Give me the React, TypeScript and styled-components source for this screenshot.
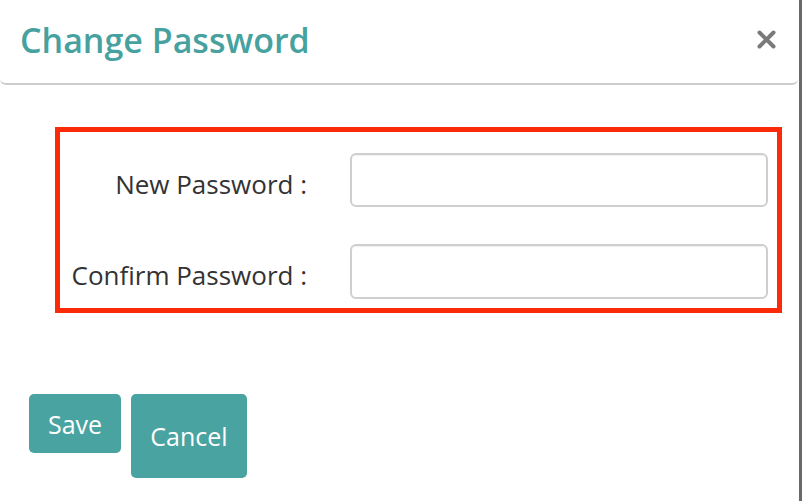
import styled, { createGlobalStyle } from 'styled-components';

const GlobalStyle = createGlobalStyle`
  body {
    margin: 0;
    font-family: "Open Sans", "Liberation Sans", sans-serif;
    background: #ffffff;
  }
`;

const Frame = styled.div`
  width: 802px;
  height: 501px;
  box-sizing: border-box;
  border-right: 3px solid #696969;
  background: #ffffff;
  display: flex;
  flex-direction: column;
  overflow: hidden;
`;

const Header = styled.div`
  height: 79px;
  margin-right: 1px;
  padding: 0 22px 4px 20px;
  display: flex;
  align-items: center;
  justify-content: space-between;
  border-bottom: 2px solid #cccccc;
  border-radius: 0 0 6px 6px;
  flex-shrink: 0;
`;

const Title = styled.h4`
  margin: 0;
  font-size: 34px;
  font-weight: 600;
  line-height: 1;
  color: #47a29f;
`;

const CloseButton = styled.button`
  border: none;
  background: none;
  padding: 0;
  width: 19px;
  height: 19px;
  display: flex;
  cursor: pointer;
`;

const Body = styled.div`
  padding: 42px 17px 0 55px;
`;

const FormBox = styled.div`
  border: 5px solid #fb2a08;
  display: grid;
  grid-template-columns: 247px 418px;
  column-gap: 43px;
  row-gap: 37px;
  padding: 21px 9px 9px 0;
`;

const Label = styled.label`
  text-align: right;
  align-self: center;
  padding-top: 9px;
  font-size: 26px;
  line-height: 1.2;
  color: #333333;
`;

const Input = styled.input<{ $h: number }>`
  height: ${p => p.$h}px;
  box-sizing: border-box;
  border: 2px solid #cfcfcf;
  border-radius: 6px;
  box-shadow: inset 0 1px 1px rgba(0, 0, 0, 0.06);
  font-family: inherit;
  font-size: 20px;
  padding: 0 12px;
  outline: none;
`;

const Actions = styled.div`
  margin-top: 81px;
  padding-left: 29px;
  display: flex;
  align-items: flex-start;
  gap: 10px;
`;

const Button = styled.button<{ $w: number; $h: number }>`
  width: ${p => p.$w}px;
  height: ${p => p.$h}px;
  background: #49a3a0;
  color: #ffffff;
  border: none;
  border-radius: 5px;
  font-family: inherit;
  font-size: 25px;
  display: flex;
  align-items: center;
  justify-content: center;
  padding: 0;
  cursor: pointer;
`;

const App = () => {
  return (
    <Frame>
      <GlobalStyle />
      <Header>
        <Title>Change Password</Title>
        <CloseButton aria-label="Close">
          <svg width="19" height="19" viewBox="0 0 19 19">
            <path d="M2.5 2.5 L16.5 16.5 M16.5 2.5 L2.5 16.5" stroke="#7a7a7a" strokeWidth="4" strokeLinecap="round" />
          </svg>
        </CloseButton>
      </Header>
      <Body>
        <FormBox>
          <Label>New Password :</Label>
          <Input type="password" $h={54} />
          <Label>Confirm Password :</Label>
          <Input type="password" $h={55} />
        </FormBox>
      </Body>
      <Actions>
        <Button $w={92} $h={59}>Save</Button>
        <Button $w={116} $h={84}>Cancel</Button>
      </Actions>
    </Frame>
  );
};

export default App;
